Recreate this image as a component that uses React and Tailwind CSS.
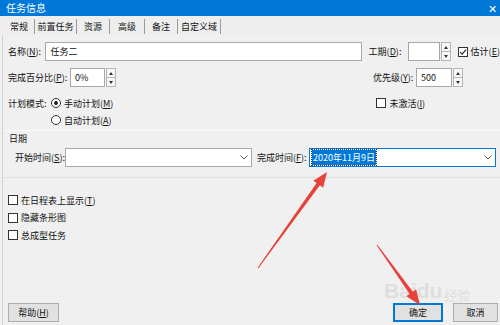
import React from "react";

const FONT = { fontFamily: '"Noto Sans CJK SC", "Noto Sans", sans-serif' };

const Spinner = () => (
  <div className="flex flex-col w-[10px] h-[19px] ml-[1px]">
    <div className="flex-1 border border-[#b5b5b5] bg-[#f7f7f7] flex items-center justify-center">
      <span className="block w-0 h-0 border-l-[2.5px] border-r-[2.5px] border-b-[3px] border-l-transparent border-r-transparent border-b-[#333]"></span>
    </div>
    <div className="flex-1 border border-t-0 border-[#b5b5b5] bg-[#f7f7f7] flex items-center justify-center">
      <span className="block w-0 h-0 border-l-[2.5px] border-r-[2.5px] border-t-[3px] border-l-transparent border-r-transparent border-t-[#333]"></span>
    </div>
  </div>
);

const Check = ({ checked, label }) => (
  <div className="flex items-center h-[16px] whitespace-nowrap">
    <div className="shrink-0 w-[10px] h-[10px] border border-[#333] bg-white flex items-center justify-center">
      {checked && (
        <svg width="8" height="8" viewBox="0 0 8 8">
          <path d="M1 4.2 L3.1 6.2 L7 1.6" fill="none" stroke="#222" strokeWidth="1.1" />
        </svg>
      )}
    </div>
    <span className="ml-[3px]">{label}</span>
  </div>
);

const Radio = ({ checked, label }) => (
  <div className="flex items-center h-[16px] whitespace-nowrap">
    <div className="w-[10px] h-[10px] rounded-full border border-[#333] bg-white flex items-center justify-center">
      {checked && <div className="w-[4px] h-[4px] rounded-full bg-[#222]"></div>}
    </div>
    <span className="ml-[3px]">{label}</span>
  </div>
);

const Chevron = () => (
  <svg width="8" height="5" viewBox="0 0 8 5" className="mr-[3px]">
    <path d="M0.5 0.5 L4 4 L7.5 0.5" fill="none" stroke="#555" strokeWidth="1" />
  </svg>
);

const arrow = (x1, y1, x2, y2) => {
  const dx = x2 - x1;
  const dy = y2 - y1;
  const len = Math.hypot(dx, dy);
  const ux = dx / len;
  const uy = dy / len;
  const px = -uy;
  const py = ux;
  const hl = 15;
  const hw = 6;
  const bx = x2 - ux * hl;
  const by = y2 - uy * hl;
  const pts = [
    [x1 + px * 0.5, y1 + py * 0.5],
    [bx + px * 2, by + py * 2],
    [bx + px * hw, by + py * hw],
    [x2, y2],
    [bx - px * hw, by - py * hw],
    [bx - px * 2, by - py * 2],
    [x1 - px * 0.5, y1 - py * 0.5],
  ];
  return pts.map((p) => p.join(",")).join(" ");
};

const tabs = [
  { label: "常规", w: "w-[31px]" },
  { label: "前置任务", w: "w-[42px]" },
  { label: "资源", w: "w-[33px]" },
  { label: "高级", w: "w-[35px]" },
  { label: "备注", w: "w-[33px]" },
  { label: "自定义域", w: "w-[43px]" },
];

export default function App() {
  return (
    <div
      className="relative w-[500px] h-[325px] overflow-hidden bg-[#f0f0f0] text-[9px] text-[#111] leading-none"
      style={FONT}
    >
      {/* title bar */}
      <div className="h-[16px] bg-[#0078d7] flex items-center justify-between pl-[6px] pr-[3px] text-white text-[10px]">
        <span>任务信息</span>
        <span className="text-[11px]">✕</span>
      </div>

      {/* tabs */}
      <div className="h-[19px] flex items-center pl-[4px] pt-[1px] bg-[#eeeeee]">
        {tabs.map((t) => (
          <div key={t.label} className={`${t.w} h-[15px] flex items-center justify-center border-r border-[#9a9a9a]`}>
            {t.label}
          </div>
        ))}
      </div>

      {/* panel */}
      <div className="h-[290px] ml-[2px] border-l border-[#d2d2d2] flex flex-col">
        {/* row 1 */}
        <div className="flex items-center mt-[7px] h-[19px]">
          <span className="ml-[5px] w-[37px]">
            名称(<u>N</u>):
          </span>
          <div className="w-[321px] h-[19px] border border-[#a8a8a8] bg-white flex items-center pl-[5px]">任务二</div>
          <span className="ml-[7px] w-[40px]">
            工期(<u>D</u>):
          </span>
          <div className="w-[32px] h-[19px] border border-[#a8a8a8] bg-white"></div>
          <Spinner />
          <div className="ml-[7px]">
            <Check checked label={<span>估计(<u>E</u>)</span>} />
          </div>
        </div>

        {/* row 2 */}
        <div className="flex items-center mt-[7px] h-[19px]">
          <span className="ml-[5px] w-[62px]">
            完成百分比(<u>P</u>):
          </span>
          <div className="w-[35px] h-[19px] border border-[#a8a8a8] bg-white flex items-center pl-[4px]">0%</div>
          <Spinner />
          <span className="ml-[257px] w-[43px]">
            优先级(<u>Y</u>):
          </span>
          <div className="w-[36px] h-[19px] border border-[#a8a8a8] bg-white flex items-center pl-[4px]">500</div>
          <Spinner />
        </div>

        {/* row 3 */}
        <div className="flex items-center mt-[8px] h-[16px]">
          <span className="ml-[5px] w-[43px]">计划模式:</span>
          <Radio checked label={<span>手动计划(<u>M</u>)</span>} />
          <div className="ml-[263px]">
            <Check label={<span>未激活(<u>I</u>)</span>} />
          </div>
        </div>

        {/* row 4 */}
        <div className="flex items-center mt-[1px] h-[16px]">
          <div className="ml-[48px]">
            <Radio label={<span>自动计划(<u>A</u>)</span>} />
          </div>
        </div>

        {/* date group */}
        <div className="mt-[2px] border-t border-[#fafafa] pt-[2px] pl-[6px] h-[13px] flex items-center">日期</div>
        <div className="flex items-center mt-[5px] h-[19px]">
          <span className="ml-[12px] w-[50px]">
            开始时间(<u>S</u>):
          </span>
          <div className="w-[187px] h-[19px] border border-[#a8a8a8] bg-white flex items-center justify-end">
            <Chevron />
          </div>
          <span className="ml-[5px] w-[52px]">
            完成时间(<u>F</u>):
          </span>
          <div className="w-[187px] h-[19px] border border-[#0078d7] bg-white flex items-center justify-between pl-[2px]">
            <span className="bg-[#0078d7] text-white h-[15px] flex items-center px-[1px] outline outline-1 outline-dotted outline-[#333]">
              2020年11月9日
            </span>
            <Chevron />
          </div>
        </div>
        <div className="mt-[10px] border-t border-[#e0e0e0]"></div>

        {/* checkboxes */}
        <div className="mt-[14px] ml-[5px] flex flex-col gap-[1.5px]">
          <Check label={<span>在日程表上显示(<u>T</u>)</span>} />
          <Check label="隐藏条形图" />
          <Check label="总成型任务" />
        </div>

        {/* buttons */}
        <div className="mt-auto mb-[3px] flex items-center h-[19px]">
          <div className="ml-[5px] w-[51px] h-[19px] border border-[#adadad] bg-[#e1e1e1] flex items-center justify-center">
            帮助(<u>H</u>)
          </div>
          <div className="ml-auto w-[50px] h-[19px] border-2 border-[#0078d7] bg-[#e1e1e1] flex items-center justify-center">
            确定
          </div>
          <div className="ml-[10px] mr-[2px] w-[45px] h-[19px] border border-[#adadad] bg-[#e1e1e1] flex items-center justify-center">
            取消
          </div>
        </div>
      </div>

      {/* watermark */}
      <div className="absolute left-[384px] top-[280px] flex items-end text-[#dedede] pointer-events-none" style={{ fontFamily: '"Liberation Sans", sans-serif' }}>
        <span className="text-[21px] font-bold leading-none">Bai</span>
        <span className="text-[21px] font-bold leading-none">du</span>
        <span className="text-[13px] leading-none ml-[2px]" style={FONT}>经验</span>
      </div>

      {/* annotation arrows */}
      <svg className="absolute inset-0 pointer-events-none" width="500" height="325">
        <polygon points={arrow(258, 268, 327, 172)} fill="#e8413a" />
        <polygon points={arrow(377, 245, 420, 305)} fill="#e8413a" />
      </svg>
    </div>
  );
}
